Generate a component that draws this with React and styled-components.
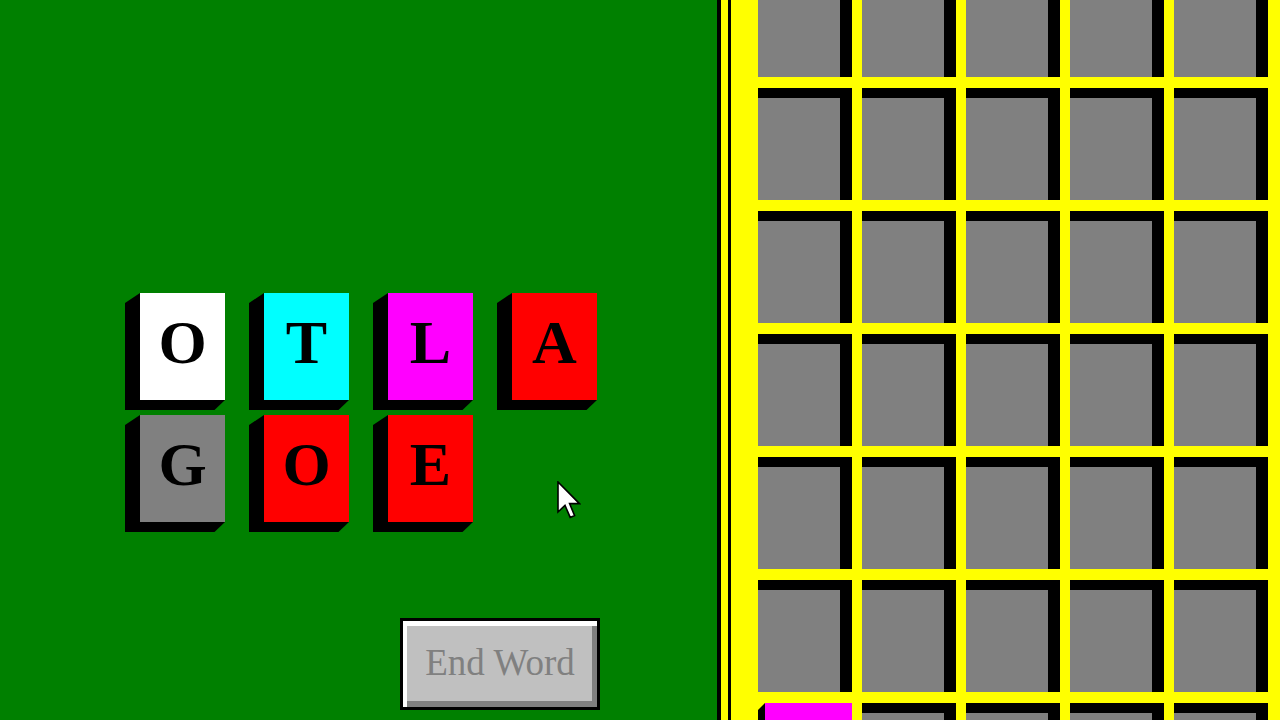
import React from "react";
import styled, { createGlobalStyle } from "styled-components";

const Global = createGlobalStyle`
  html, body { margin: 0; padding: 0; overflow: hidden; background: #008000; }
  * { box-sizing: border-box; }
`;

const Screen = styled.div`
  display: flex;
  width: 1280px;
  height: 720px;
  overflow: hidden;
`;

const PlayArea = styled.div`
  position: relative;
  flex: 0 0 717px;
  background: #008000;
  padding: 293px 0 0 125px;
`;

const Column = styled.div`
  display: flex;
  flex-direction: column;
  width: 475px;
`;

const Rack = styled.div`
  display: grid;
  grid-template-columns: repeat(4, 100px);
  column-gap: 24px;
  row-gap: 5px;
`;

const Block = styled.div`
  position: relative;
  width: ${(p) => p.$w}px;
  height: ${(p) => p.$h}px;
  padding-left: ${(p) => p.$dx}px;
  padding-bottom: ${(p) => p.$dy}px;
  &::before {
    content: "";
    position: absolute;
    inset: 0;
    background: #000;
    clip-path: polygon(
      ${(p) => p.$dx}px 0,
      100% 0,
      100% calc(100% - ${(p) => p.$dy}px),
      calc(100% - ${(p) => p.$dx * 0.7}px) 100%,
      0 100%,
      0 ${(p) => p.$dy}px
    );
  }
`;

const Face = styled.div`
  position: relative;
  width: 100%;
  height: 100%;
  background: ${(p) => p.$color};
  display: flex;
  align-items: center;
  justify-content: center;
  padding-bottom: 10px;
  font-family: "Liberation Serif", "Times New Roman", serif;
  font-weight: bold;
  font-size: 62px;
  line-height: 1;
  color: #000;
`;

const EndButton = styled.button`
  align-self: flex-end;
  margin-top: 86px;
  width: 200px;
  height: 92px;
  border: 3px solid #000;
  background: #c0c0c0;
  box-shadow: inset 4px 5px 0 #ffffff, inset -5px -6px 0 #808080;
  font-family: "Liberation Serif", "Times New Roman", serif;
  font-size: 37px;
  color: #808080;
  padding: 0 0 4px 0;
  cursor: default;
`;

const Pointer = styled.svg`
  position: absolute;
  left: 557px;
  top: 481px;
`;

const BoardFrame = styled.div`
  flex: 1;
  background: #ffff00;
  border-left: 4px solid #000;
  padding-left: 7px;
  display: flex;
`;

const BoardInner = styled.div`
  flex: 1;
  background: #ffff00;
  border-left: 3px solid #000;
  padding-left: 27px;
  overflow: hidden;
`;

const Grid = styled.div`
  display: grid;
  grid-template-columns: repeat(5, 94px);
  grid-auto-rows: 112px;
  column-gap: 10px;
  row-gap: 11px;
  margin-top: -35px;
`;

const Cell = styled.div`
  background: #808080;
  border-top: 10px solid #000;
  border-right: 12px solid #000;
`;

const rack = [
  { l: "O", c: "#ffffff" },
  { l: "T", c: "#00ffff" },
  { l: "L", c: "#ff00ff" },
  { l: "A", c: "#ff0000" },
  { l: "G", c: "#808080" },
  { l: "O", c: "#ff0000" },
  { l: "E", c: "#ff0000" },
];

export default function App() {
  const cells = Array.from({ length: 35 }, (_, i) => i);
  return (
    <>
      <Global />
      <Screen>
        <PlayArea>
          <Column>
            <Rack>
              {rack.map((t, i) => (
                <Block key={i} $w={100} $h={117} $dx={15} $dy={10}>
                  <Face $color={t.c}>{t.l}</Face>
                </Block>
              ))}
            </Rack>
            <EndButton>End Word</EndButton>
          </Column>
          <Pointer width="24" height="38" viewBox="0 0 12 19" preserveAspectRatio="none">
            <path
              d="M0.5 0.5 L0.5 15.5 L4 12.2 L6.6 18.2 L8.8 17.3 L6.3 11.3 L11.2 11.3 Z"
              fill="#ffffff"
              stroke="#000"
              strokeWidth="0.8"
              strokeLinejoin="miter"
            />
          </Pointer>
        </PlayArea>
        <BoardFrame>
          <BoardInner>
            <Grid>
              {cells.map((i) =>
                i === 30 ? (
                  <Block key={i} $w={94} $h={112} $dx={7} $dy={7}>
                    <Face $color="#ff00ff" />
                  </Block>
                ) : (
                  <Cell key={i} />
                )
              )}
            </Grid>
          </BoardInner>
        </BoardFrame>
      </Screen>
    </>
  );
}
